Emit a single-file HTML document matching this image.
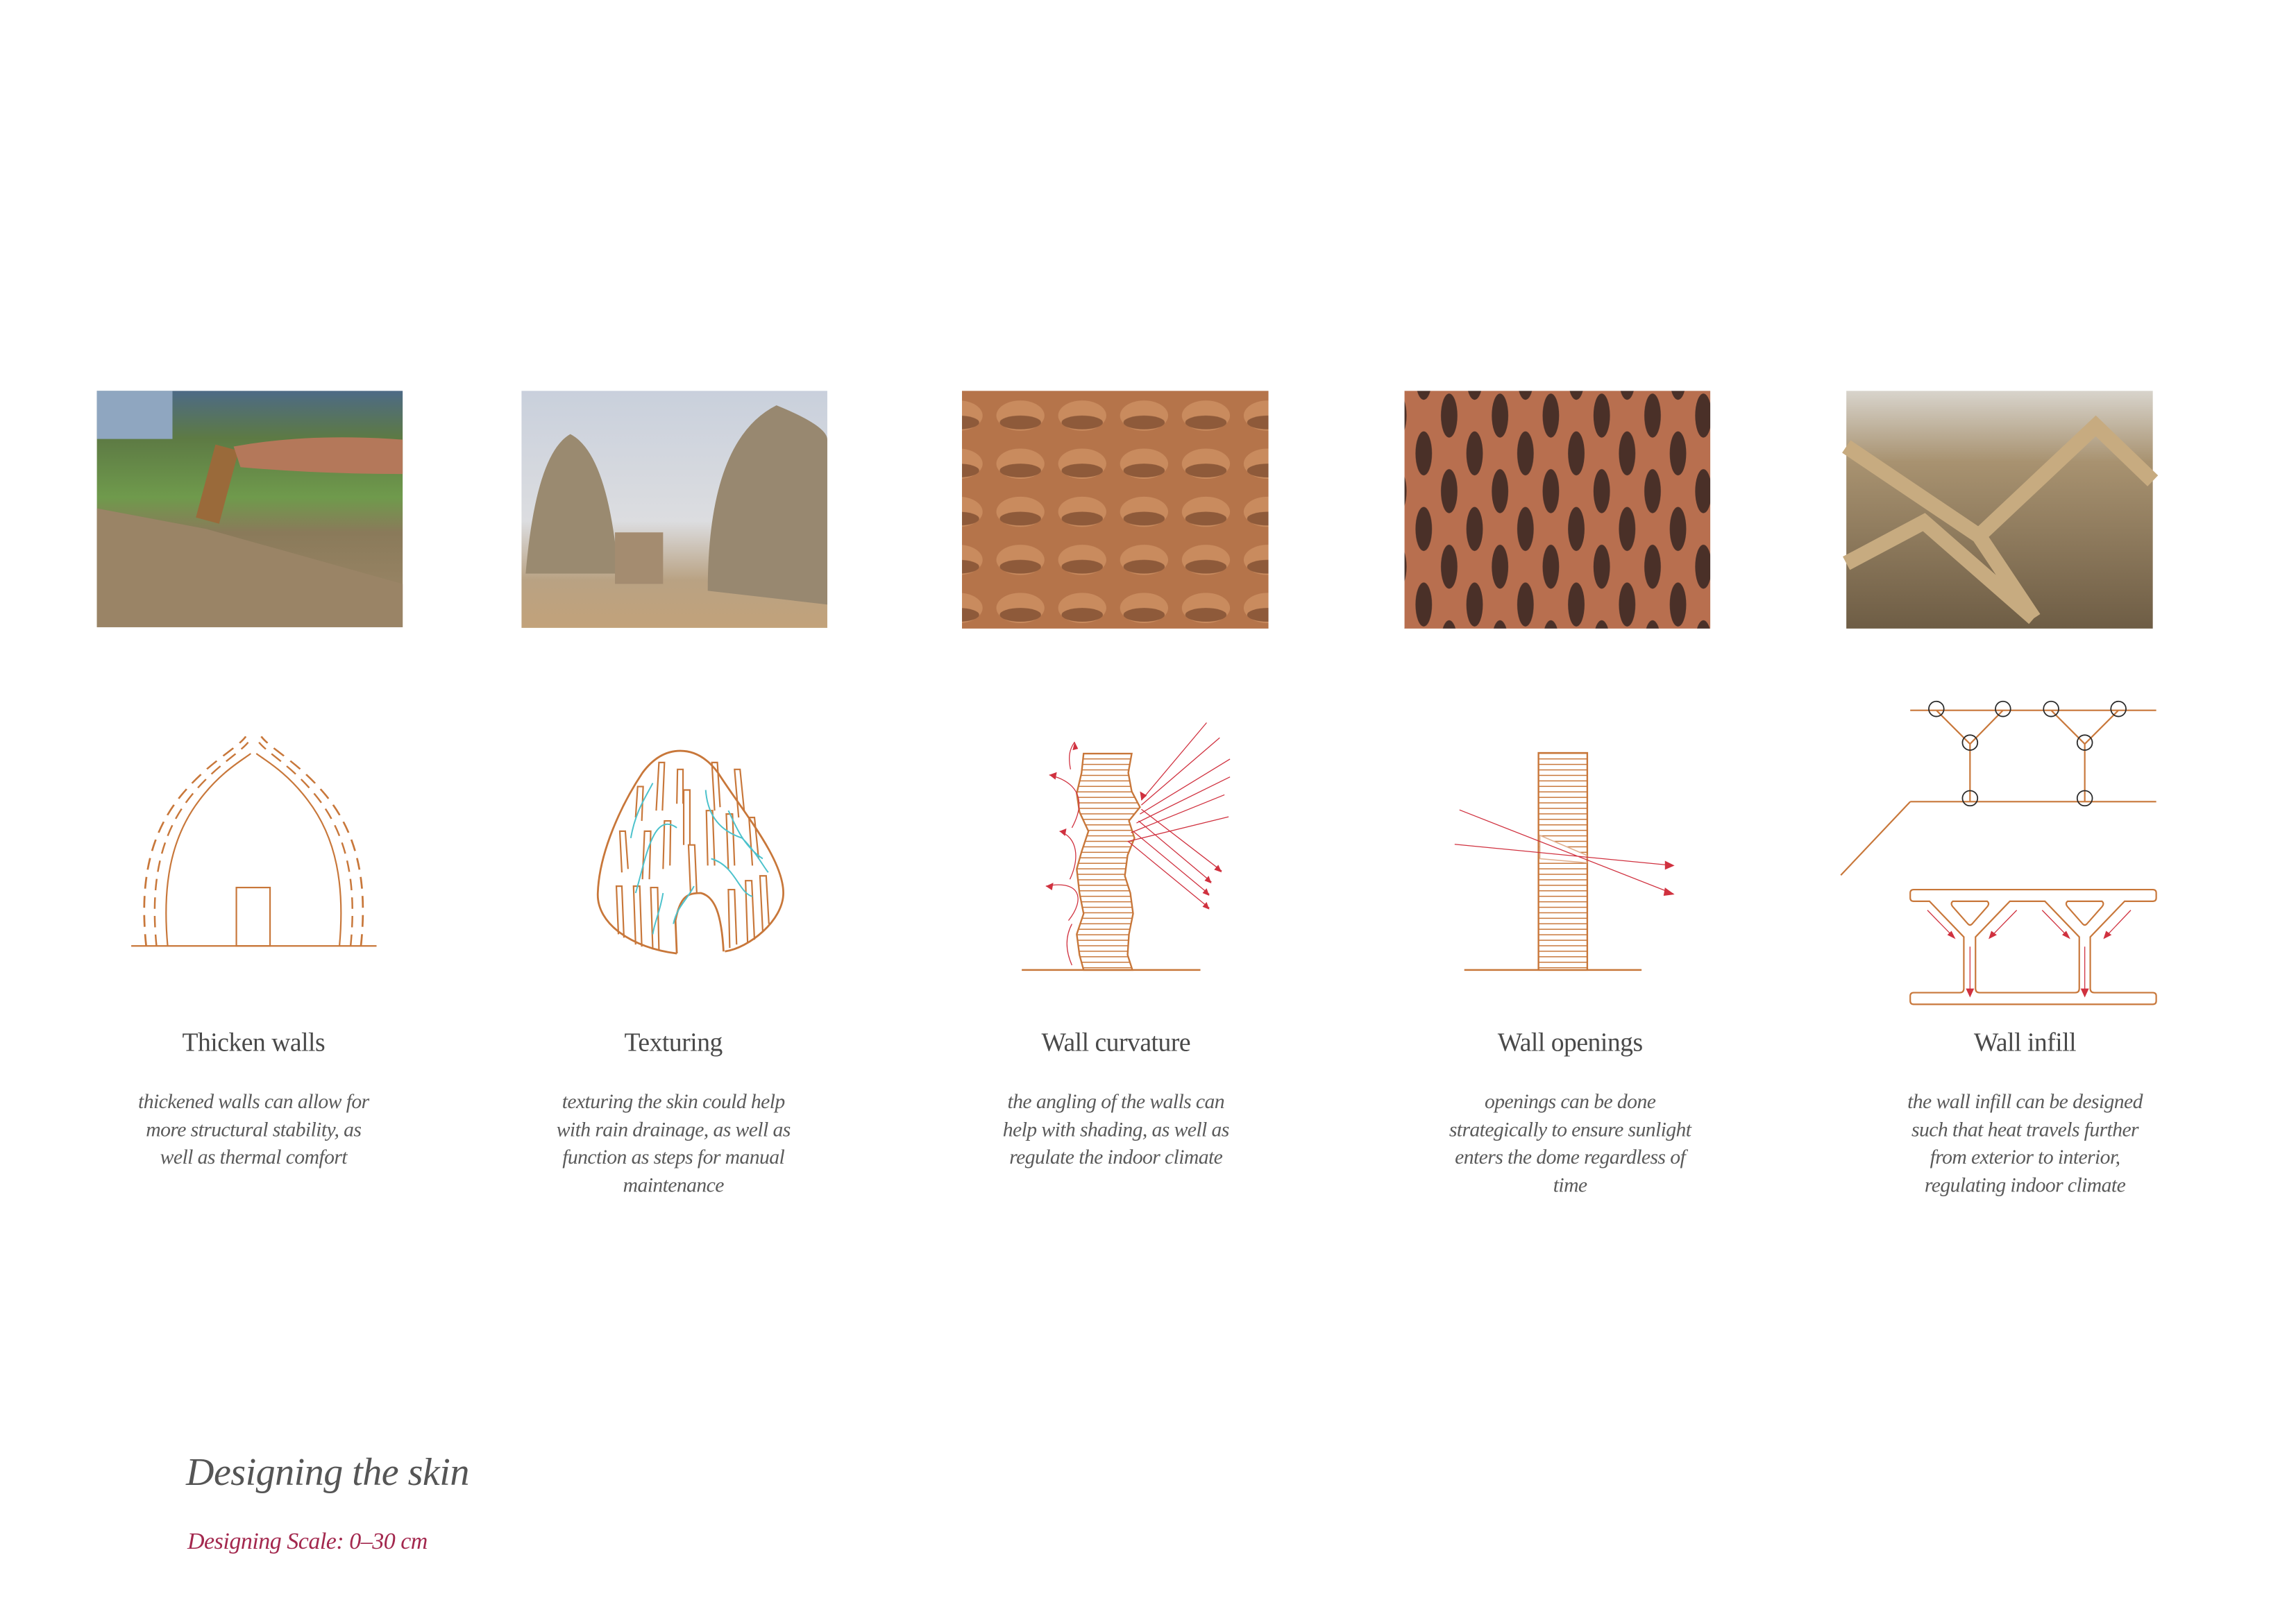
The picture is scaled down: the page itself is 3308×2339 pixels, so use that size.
<!DOCTYPE html>
<html><head><meta charset="utf-8"><style>
html,body{margin:0;padding:0;background:#fff}
body{width:3308px;height:2339px;position:relative;overflow:hidden;font-family:"Liberation Serif",serif}
#w{position:absolute;left:0;top:0;width:3308px;height:2339px;transform:scale(0.99);transform-origin:0 0}
.t{position:absolute;width:600px;text-align:center;color:#4a4a4a;font-size:38px;top:1496px;letter-spacing:-0.5px}
.d{position:absolute;width:600px;text-align:center;color:#5a5a5a;font-size:30px;font-style:italic;line-height:40.5px;top:1584px;letter-spacing:-0.6px}
</style></head><body>
<div id="w">
<svg width="3308" height="2339" style="position:absolute;left:0;top:0">
<defs>
<pattern id="st" width="10" height="8" patternUnits="userSpaceOnUse"><rect width="10" height="8" fill="#fff"/><line x1="0" y1="0.7" x2="10" y2="0.7" stroke="#c8773a" stroke-width="1.6"/></pattern>
<linearGradient id="g1" x1="0" y1="0" x2="0" y2="1"><stop offset="0" stop-color="#4d6a86"/><stop offset=".2" stop-color="#5d7a44"/><stop offset=".45" stop-color="#6f9a4c"/><stop offset=".6" stop-color="#8a7a5a"/><stop offset="1" stop-color="#a08a6a"/></linearGradient>
<linearGradient id="g2" x1="0" y1="0" x2="0" y2="1"><stop offset="0" stop-color="#c9d0dc"/><stop offset=".55" stop-color="#dcdde0"/><stop offset=".8" stop-color="#b9a283"/><stop offset="1" stop-color="#c2a27a"/></linearGradient>
<linearGradient id="g5" x1="0" y1="0" x2="0" y2="1"><stop offset="0" stop-color="#d8d4cc"/><stop offset=".3" stop-color="#a89270"/><stop offset="1" stop-color="#6e5d45"/></linearGradient>
<pattern id="wv" width="90" height="70" patternUnits="userSpaceOnUse"><rect width="90" height="70" fill="#b5744a"/><ellipse cx="45" cy="45" rx="35" ry="22" fill="#c98b5e"/><ellipse cx="45" cy="55" rx="30" ry="10" fill="#8e5a3a"/></pattern>
<pattern id="lt" width="74" height="110" patternUnits="userSpaceOnUse"><rect width="74" height="110" fill="#b86f4f"/><ellipse cx="37" cy="55" rx="12" ry="32" fill="#4a3028"/><ellipse cx="0" cy="0" rx="12" ry="32" fill="#4a3028"/><ellipse cx="74" cy="0" rx="12" ry="32" fill="#4a3028"/><ellipse cx="0" cy="110" rx="12" ry="32" fill="#4a3028"/><ellipse cx="74" cy="110" rx="12" ry="32" fill="#4a3028"/></pattern>
</defs>
<rect x="141" y="569" width="445" height="344" fill="url(#g1)"/>
<polygon points="141,740 300,770 586,850 586,913 141,913" fill="#9a8466"/>
<rect x="141" y="569" width="110" height="70" fill="#8fa6c0"/>
<rect x="300" y="650" width="35" height="110" fill="#9a6a3a" transform="rotate(15 318 700)"/>
<path d="M340 650 Q450 630 586 640 L586 690 Q460 690 350 680Z" fill="#b4785a"/>
<rect x="759" y="569" width="445" height="345" fill="url(#g2)"/>
<path d="M765 835 Q780 660 830 632 Q885 660 900 835Z" fill="#9a8a70"/>
<path d="M1030 860 Q1030 640 1130 590 Q1204 620 1204 640 L1204 880Z" fill="#988870"/>
<rect x="895" y="775" width="70" height="75" fill="#a48c70"/>
<rect x="1400" y="569" width="446" height="346" fill="url(#wv)"/>
<rect x="2044" y="569" width="445" height="346" fill="url(#lt)"/>
<rect x="2687" y="569" width="446" height="346" fill="url(#g5)"/>
<path d="M2687 650 L2880 780 L3050 620 L3133 700 M2687 820 L2800 760 L2960 900 M2880 780 L2960 900" stroke="#c7ab80" stroke-width="22" fill="none"/>

<g fill="none" stroke="#c8773a" stroke-width="2.2">
<line x1="191" y1="1377" x2="548" y2="1377"/>
<rect x="344" y="1292" width="49" height="85"/>
<path d="M244 1377 C236 1290 248 1220 290 1165 C320 1125 350 1108 365 1097"/><path d="M494 1377 C502 1290 490 1220 448 1165 C418 1125 388 1108 373 1097"/>
<g stroke-dasharray="16 10" transform="translate(369 1377) scale(1.13 1.04) translate(-369 -1377)"><path d="M244 1377 C236 1290 248 1220 290 1165 C320 1125 350 1108 362 1092"/><path d="M494 1377 C502 1290 490 1220 448 1165 C418 1125 388 1108 376 1092"/></g>
<g stroke-dasharray="16 10" transform="translate(369 1377) scale(1.25 1.07) translate(-369 -1377)"><path d="M244 1377 C236 1290 248 1220 290 1165 C320 1125 350 1108 360 1092"/><path d="M494 1377 C502 1290 490 1220 448 1165 C418 1125 388 1108 378 1092"/></g>
<path d="M985 1388 C920 1380 868 1345 870 1300 C872 1240 905 1170 935 1125 C955 1098 975 1093 990 1093 C1005 1093 1025 1098 1045 1125 C1080 1180 1140 1250 1140 1300 C1140 1340 1090 1380 1055 1385" stroke-width="2.8"/>
<path d="M985 1388 L983 1340 C990 1305 1000 1300 1020 1300 C1040 1305 1050 1330 1053 1385" stroke-width="2.8"/>
<path d="M900 1360 l-3 -70 h8 l3 75 M925 1375 l-3 -85 h9 l3 88 M950 1382 l-3 -90 h10 l2 92 M1005 1300 l-3 -70 h9 l3 70 M1062 1380 l-2 -85 h9 l3 80 M1088 1372 l-3 -90 h9 l4 86 M1110 1355 l-4 -80 h9 l4 70 M905 1270 l-3 -60 h8 l4 55 M935 1280 l3 -70 h9 l-2 70 M965 1265 l2 -70 h9 l-1 65 M995 1230 l0 -80 h9 l0 80 M1030 1260 l-2 -80 h9 l3 80 M1060 1265 l-3 -80 h9 l3 75 M1095 1260 l-5 -70 h8 l6 60 M925 1190 l3 -45 h8 l-2 50 M955 1180 l4 -70 h8 l-3 70 M985 1170 l1 -50 h8 l0 50 M1040 1180 l-4 -70 h8 l4 65 M1075 1190 l-6 -70 h8 l6 60"/>
<path d="M950 1140 C940 1160 925 1180 918 1220 M985 1205 C950 1180 940 1250 925 1300 M1027 1150 C1030 1190 1050 1210 1080 1220 C1100 1240 1110 1260 1118 1270 M1035 1250 C1070 1260 1075 1300 1095 1305 M965 1300 C960 1330 953 1340 950 1360 M1010 1290 C1000 1310 985 1320 980 1345 M1060 1180 C1070 1200 1080 1230 1110 1250" stroke="#4cc2cc" stroke-width="2"/>
<path transform="translate(9 0)" d="M1568 1097 L1565 1125 L1558 1155 L1562 1182 L1575 1210 L1565 1240 L1558 1265 L1562 1300 L1568 1330 L1558 1360 L1562 1390 L1568 1412 L1639 1412 L1632 1390 L1634 1360 L1640 1330 L1636 1300 L1628 1275 L1632 1245 L1642 1220 L1634 1195 L1650 1175 L1638 1152 L1633 1125 L1638 1097Z" fill="url(#st)" stroke-width="2.4"/>
<line x1="1487" y1="1412" x2="1747" y2="1412" stroke-width="2.6"/>
<line x1="2131" y1="1412" x2="2389" y2="1412" stroke-width="2.6"/>
<g transform="translate(15 0)">
<rect x="2224" y="1096" width="71" height="316" fill="url(#st)" stroke-width="2.4"/>
<path d="M2226 1216 L2294 1245 L2294 1256 L2226 1250Z" fill="#fff" stroke="#e0b090" stroke-width="1.6"/>
</g>
<g transform="translate(28 9)">
<path d="M2752 1025 H3110 M2752 1158 H3110 M2752 1158 L2651 1265 M2790 1025 L2839 1074 L2887 1025 M2957 1025 L3006 1074 L3055 1025 M2839 1074 V1158 M3006 1074 V1158"/>
<path d="M2757 1286 H3105 Q3110 1286 3110 1291 V1298 Q3110 1303 3105 1303 H3064 L3014 1355 V1430 Q3014 1436 3020 1436 H3105 Q3110 1436 3110 1441 V1448 Q3110 1453 3105 1453 H2757 Q2752 1453 2752 1448 V1441 Q2752 1436 2757 1436 H2824 Q2830 1436 2830 1430 V1355 L2780 1303 H2757 Q2752 1303 2752 1298 V1291 Q2752 1286 2757 1286Z M2847 1355 V1430 Q2847 1436 2853 1436 H2992 Q2998 1436 2998 1430 V1355 L2948 1303 H2897Z M2814 1303 H2864 Q2868 1306 2864 1311 L2842 1336 Q2839 1339 2836 1336 L2814 1311 Q2810 1306 2814 1303Z M2981 1303 H3031 Q3035 1306 3031 1311 L3009 1336 Q3006 1339 3003 1336 L2981 1311 Q2977 1306 2981 1303Z"/>
</g>
</g>
<g fill="none" stroke="#2a2a2a" stroke-width="1.8" transform="translate(28 9)">
<circle cx="2790" cy="1023" r="11"/><circle cx="2887" cy="1023" r="11"/><circle cx="2957" cy="1023" r="11"/><circle cx="3055" cy="1023" r="11"/>
<circle cx="2839" cy="1072" r="11"/><circle cx="3006" cy="1072" r="11"/><circle cx="2839" cy="1153" r="11"/><circle cx="3006" cy="1153" r="11"/>
</g>
<g stroke="#d0313f" stroke-width="1.3" fill="none">
<g transform="translate(9 0)">
<path d="M1747 1052 L1652 1165 M1766 1074 L1652 1172 M1781 1105 L1650 1185 M1781 1131 L1645 1198 M1773 1157 L1637 1212 M1779 1189 L1632 1225"/>
<path d="M1652 1178 L1769 1268 M1648 1195 L1754 1284 M1640 1210 L1751 1302 M1633 1225 L1751 1322"/>
<path d="M1551 1405 C1540 1380 1543 1360 1551 1345 M1546 1340 C1570 1310 1565 1280 1513 1290 M1548 1280 C1562 1250 1560 1220 1533 1210 M1551 1205 C1570 1170 1565 1140 1518 1128 M1549 1120 C1545 1100 1548 1090 1555 1080"/>
</g>
<path transform="translate(15 0)" d="M2109 1179 L2420 1301 M2102 1229 L2420 1260"/>
<path transform="translate(28 9)" d="M2777 1316 L2815 1355 M2907 1316 L2869 1355 M2944 1316 L2982 1355 M3073 1316 L3036 1355 M2839 1369 V1440 M3006 1369 V1440"/>
</g>
<g fill="#d0313f">
<g transform="translate(15 0)"><polygon points="2422,1302 2408,1292 2406,1304"/><polygon points="2422,1260 2408,1253 2408,1266"/></g>
<g transform="translate(28 9)"><polygon points="2818,1358 2806,1352 2812,1346"/><polygon points="2866,1358 2870,1346 2878,1352"/><polygon points="2985,1358 2973,1352 2979,1346"/><polygon points="3033,1358 3037,1346 3045,1352"/>
<polygon points="2839,1443 2833,1430 2845,1430"/><polygon points="3006,1443 3000,1430 3012,1430"/></g>
<g transform="translate(9 0)"><polygon points="1652,1165 1650,1152 1660,1158"/><polygon points="1769,1270 1758,1266 1764,1259"/><polygon points="1754,1286 1744,1282 1750,1275"/><polygon points="1751,1304 1741,1300 1747,1293"/><polygon points="1751,1324 1741,1320 1747,1313"/>
<polygon points="1513,1290 1524,1285 1522,1296"/><polygon points="1533,1210 1543,1206 1541,1217"/><polygon points="1518,1128 1529,1124 1527,1135"/><polygon points="1555,1080 1552,1092 1560,1090"/></g>
</g>
</svg>
<div class="t" style="left:69px">Thicken walls</div>
<div class="t" style="left:680px">Texturing</div>
<div class="t" style="left:1324px">Wall curvature</div>
<div class="t" style="left:1985px">Wall openings</div>
<div class="t" style="left:2647px">Wall infill</div>
<div class="d" style="left:69px">thickened walls can allow for<br>more structural stability, as<br>well as thermal comfort</div>
<div class="d" style="left:680px">texturing the skin could help<br>with rain drainage, as well as<br>function as steps for manual<br>maintenance</div>
<div class="d" style="left:1324px">the angling of the walls can<br>help with shading, as well as<br>regulate the indoor climate</div>
<div class="d" style="left:1985px">openings can be done<br>strategically to ensure sunlight<br>enters the dome regardless of<br>time</div>
<div class="d" style="left:2647px">the wall infill can be designed<br>such that heat travels further<br>from exterior to interior,<br>regulating indoor climate</div>
</div>
<div style="position:absolute;left:268px;top:2090px;font-size:56px;font-style:italic;color:#555;white-space:nowrap;letter-spacing:-0.5px">Designing the skin</div>
<div style="position:absolute;left:270px;top:2203px;font-size:34px;font-style:italic;color:#a3284e;white-space:nowrap;letter-spacing:-0.5px">Designing Scale: 0–30 cm</div>
</body></html>
